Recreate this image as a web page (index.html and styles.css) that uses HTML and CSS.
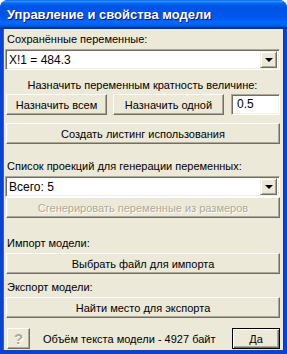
FILE: index.html
```html
<!DOCTYPE html>
<html lang="ru">
<head>
    <meta charset="UTF-8">
    <title>Управление и свойства модели</title>
    <link rel="stylesheet" href="styles.css">
</head>
<body>
    <div class="window">
        <div class="titlebar">
            <span class="title">Управление и свойства модели</span>
        </div>
        <div class="client">
            <div class="label">Сохранённые переменные:</div>
            <div class="combo">
                <span class="combo-text">X!1 = 484.3</span>
                <span class="combo-btn"><span class="arrow"></span></span>
            </div>

            <div class="label center hint">Назначить переменным кратность величине:</div>
            <div class="btn-row">
                <button class="btn btn-all">Назначить всем</button>
                <button class="btn btn-one">Назначить одной</button>
                <div class="field">0.5</div>
            </div>
            <button class="btn wide listing">Создать листинг использования</button>

            <div class="label section">Список проекций для генерации переменных:</div>
            <div class="combo">
                <span class="combo-text">Всего: 5</span>
                <span class="combo-btn"><span class="arrow"></span></span>
            </div>
            <button class="btn wide disabled">Сгенерировать переменные из размеров</button>

            <div class="label import">Импорт модели:</div>
            <button class="btn wide">Выбрать файл для импорта</button>
            <div class="label export">Экспорт модели:</div>
            <button class="btn wide">Найти место для экспорта</button>

            <div class="footer">
                <button class="btn help disabled">?</button>
                <span class="size-text">Объём текста модели - 4927 байт</span>
                <button class="btn ok">Да</button>
            </div>
        </div>
    </div>
</body>
</html>
```

FILE: styles.css
```css
* {
    margin: 0;
    padding: 0;
    box-sizing: border-box;
}

body {
    width: 287px;
    height: 354px;
    overflow: hidden;
    background: #ffffff;
    font-family: 'Liberation Sans', Arial, sans-serif;
    font-size: 11px;
    color: #000;
}

.window {
    width: 287px;
    height: 354px;
    display: flex;
    flex-direction: column;
    background: #0842d6;
    border-radius: 8px 8px 0 0;
    overflow: hidden;
}

.titlebar {
    height: 29px;
    flex-shrink: 0;
    display: flex;
    align-items: center;
    padding: 0 0 1px 7px;
    background: linear-gradient(#0058ee 0%, #3593ff 4%, #288eff 6%, #127dff 8%, #036ffc 10%, #0262ee 14%, #0057e5 20%, #0054e3 24%, #0055eb 56%, #005bf5 66%, #026afe 76%, #0062ef 86%, #0052d6 92%, #0040ab 94%, #003092 100%);
}

.title {
    color: #fff;
    font-weight: bold;
    font-size: 13px;
    text-shadow: 1px 1px #0f1089;
}

.client {
    flex: 1;
    margin: 0 4px 4px 4px;
    background: #ece9d8;
    padding: 4px 3px 0 1px;
    display: flex;
    flex-direction: column;
    box-shadow: -1px 0 #166aee, 1px 0 #0831d9;
}

.label {
    height: 13px;
    line-height: 13px;
    margin-left: 2px;
    white-space: nowrap;
}

.center {
    text-align: center;
    margin-left: 0;
}

.combo {
    height: 21px;
    margin-top: 3px;
    display: flex;
    align-items: center;
    background: #fff;
    border: 1px solid;
    border-color: #aca899 #fff #fff #aca899;
    box-shadow: inset 1px 1px #716f64, inset -1px -1px #f1efe2;
    padding: 0 2px 0 3px;
    font-size: 12px;
}

.combo-text {
    flex: 1;
}

.combo-btn {
    width: 17px;
    height: 17px;
    display: flex;
    align-items: center;
    justify-content: center;
    background: #ece9d8;
    border: 1px solid;
    border-color: #f1efe2 #716f64 #716f64 #f1efe2;
    box-shadow: inset 1px 1px #fff, inset -1px -1px #aca899;
}

.arrow {
    width: 0;
    height: 0;
    border-left: 4px solid transparent;
    border-right: 4px solid transparent;
    border-top: 4px solid #000;
}

.hint {
    margin-top: 9px;
}

.btn {
    height: 21px;
    font-family: inherit;
    font-size: 11px;
    color: #000;
    background: #ece9d8;
    border: 1px solid;
    border-color: #fff #716f64 #716f64 #fff;
    box-shadow: inset -1px -1px #aca899;
}

.btn-row {
    display: flex;
    align-items: center;
    margin-top: 2px;
    margin-left: 1px;
}

.btn-all {
    width: 101px;
}

.btn-one {
    width: 111px;
    margin-left: 6px;
}

.field {
    width: 49px;
    height: 21px;
    margin-left: auto;
    line-height: 19px;
    padding-left: 5px;
    font-size: 12px;
    background: #fff;
    border: 1px solid;
    border-color: #aca899 #fff #fff #aca899;
    box-shadow: inset 1px 1px #716f64, inset -1px -1px #f1efe2;
}

.wide {
    width: auto;
    margin-left: 1px;
}

.listing {
    margin-top: 8px;
}

.section {
    margin-top: 16px;
}

.disabled {
    color: #aca899;
    text-shadow: 1px 1px #fff;
}

.import {
    margin-top: 19px;
}

.export {
    margin-top: 7px;
}

.label + .btn {
    margin-top: 3px;
}

.footer {
    display: flex;
    align-items: center;
    margin-top: 10px;
    margin-left: 2px;
}

.help {
    width: 23px;
    font-weight: bold;
    font-size: 15px;
    line-height: 15px;
}

.size-text {
    margin-left: 13px;
}

.ok {
    width: 48px;
    margin-left: auto;
    border: 1px solid #000;
    box-shadow: inset 1px 1px #fff, inset -1px -1px #716f64, inset -2px -2px #aca899;
}
```
